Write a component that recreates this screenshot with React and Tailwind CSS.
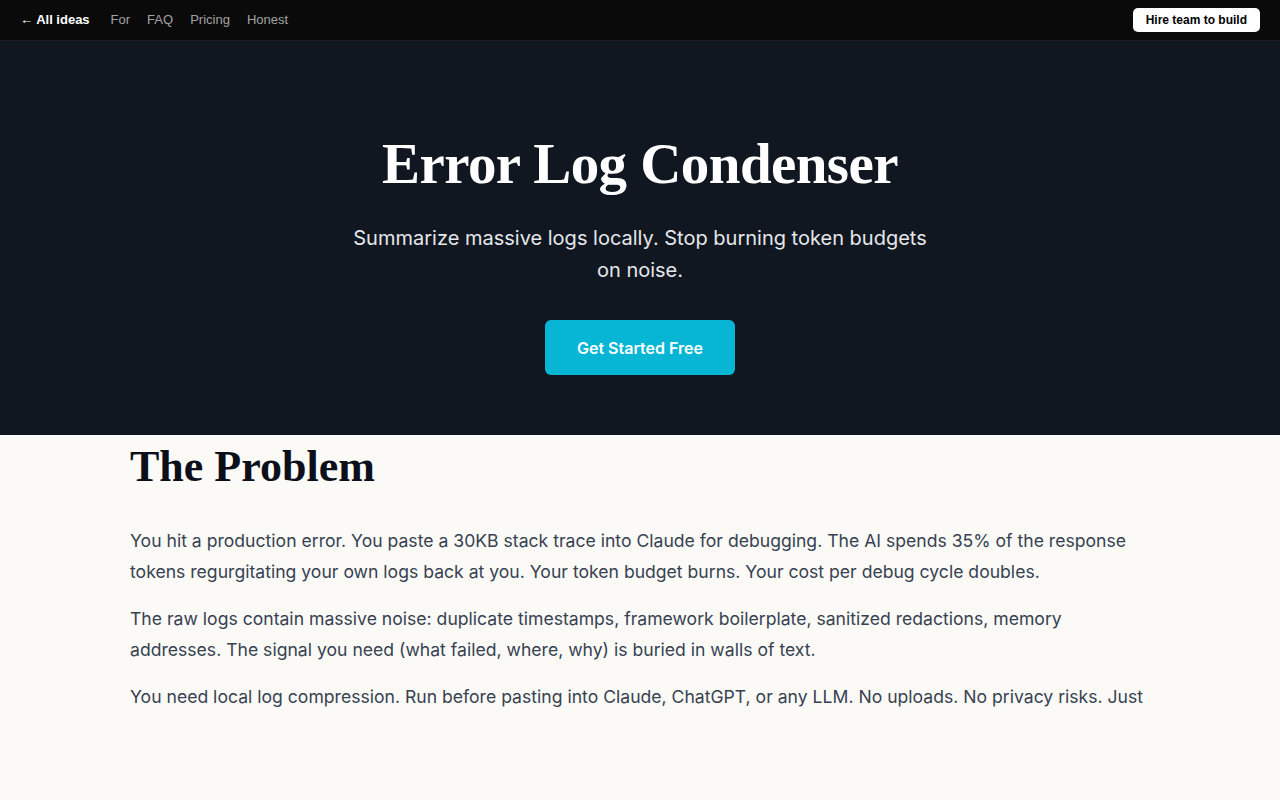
import React from 'react';

const navLinks = ['For', 'FAQ', 'Pricing', 'Honest'];

const paragraphs = [
  'You hit a production error. You paste a 30KB stack trace into Claude for debugging. The AI spends 35% of the response tokens regurgitating your own logs back at you. Your token budget burns. Your cost per debug cycle doubles.',
  'The raw logs contain massive noise: duplicate timestamps, framework boilerplate, sanitized redactions, memory addresses. The signal you need (what failed, where, why) is buried in walls of text.',
  'You need local log compression. Run before pasting into Claude, ChatGPT, or any LLM. No uploads. No privacy risks. Just',
];

export default function App() {
  return (
    <div className="min-h-screen bg-[#fbfaf7] font-['Inter',sans-serif]">
      {/* top bar */}
      <header className="h-[41px] bg-[#0a0a0a] border-b border-[#1c1c1c] flex items-center justify-between px-5 font-['Liberation_Sans',Arial,sans-serif]">
        <nav className="flex items-center text-[13px]">
          <a className="text-white font-bold mr-[21px]">← All ideas</a>
          <div className="flex items-center gap-[17px] text-[#a3a3a3]">
            {navLinks.map((l) => (
              <a key={l}>{l}</a>
            ))}
          </div>
        </nav>
        <button className="bg-white text-black text-[12px] font-bold px-[13px] h-[24px] rounded-[5px]">
          Hire team to build
        </button>
      </header>

      {/* hero */}
      <section className="h-[394px] bg-[#111720] flex flex-col items-center pt-[91px]">
        <h1 className="text-white text-[57px] leading-[64px] font-bold font-['Liberation_Serif',serif] tracking-[-0.01em]">
          Error Log Condenser
        </h1>
        <p className="mt-[26px] max-w-[590px] text-center text-[20px] leading-[32px] text-[#e5e7eb]">
          Summarize massive logs locally. Stop burning token budgets on noise.
        </p>
        <button className="mt-[34px] w-[190px] h-[55px] rounded-[6px] bg-[#06b6d4] text-white text-[16px] font-semibold">
          Get Started Free
        </button>
      </section>

      {/* problem */}
      <section className="max-w-[1020px] mx-auto pt-[8px]">
        <h2 className="text-[#0b0f19] text-[44px] leading-[48px] font-bold font-['Liberation_Serif',serif]">
          The Problem
        </h2>
        <div className="mt-[34px] flex flex-col gap-[16px]">
          {paragraphs.map((p, i) => (
            <p key={i} className="text-[17.6px] leading-[31px] text-[#374151]">
              {p}
            </p>
          ))}
        </div>
      </section>
    </div>
  );
}
